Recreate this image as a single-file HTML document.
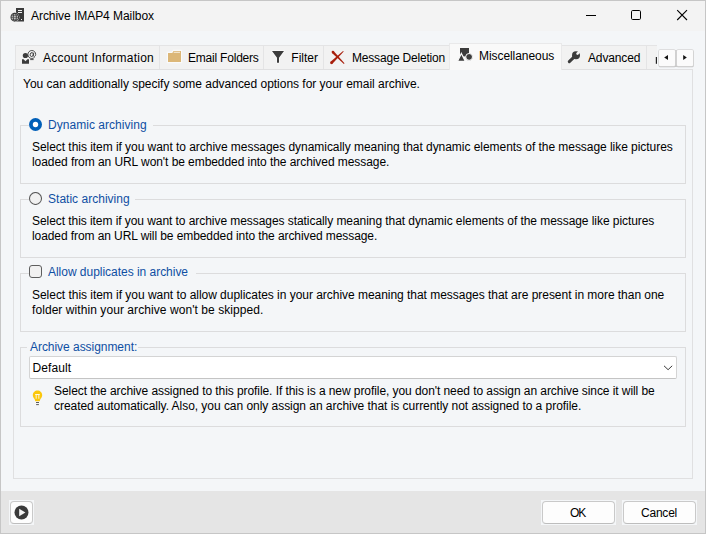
<!DOCTYPE html>
<html>
<head>
<meta charset="utf-8">
<title>Archive IMAP4 Mailbox</title>
<style>
html,body{margin:0;padding:0;}
body{width:706px;height:534px;overflow:hidden;background:#f3f3f3;font-family:"Liberation Sans",sans-serif;font-size:12px;color:#000;position:relative;}
.abs{position:absolute;}
.t{position:absolute;z-index:5;white-space:nowrap;line-height:15px;height:15px;}
#win{position:absolute;left:0;top:0;width:704px;height:532px;border:1px solid #c6c6c6;}
#titlebar{position:absolute;left:1px;top:1px;width:704px;height:30px;background:#f3f3f3;}
#content{position:absolute;left:1px;top:31px;width:704px;height:460px;background:#f4f6f8;}
#fade{position:absolute;left:1px;top:28px;width:704px;height:8px;background:linear-gradient(#f3f3f3,#f4f6f8);}
#footer{position:absolute;left:1px;top:491px;width:704px;height:42px;background:#e5e5e5;}
.tab{position:absolute;top:45px;height:24px;background:#f2f2f2;border:1px solid #e4e4e5;border-bottom:none;box-sizing:border-box;}
.tab.active{top:43px;height:27px;background:#f9f9f9;border-color:#e9e9ea;z-index:3;}
#pane{position:absolute;left:13px;top:69px;width:678px;height:408px;border:1px solid #e0e0e1;background:#f4f6f8;}
.gb{position:absolute;left:20px;width:664px;border:1px solid #dcdcdd;}
.cap{position:absolute;background:#f4f6f8;color:#0f4fa3;white-space:nowrap;line-height:15px;height:15px;}
.btn{position:absolute;background:#fdfdfd;border:1px solid #c9c9c9;border-bottom-color:#bdbdbd;border-radius:4px;box-sizing:border-box;text-align:center;}
.sb{position:absolute;top:50px;height:16px;width:16px;background:#fbfbfb;border-radius:1px;box-shadow:0 0 0 0.7px #d6d6d6, 0.2px 0.7px 0 0.5px #c2c2c2;}
.btnbg{position:absolute;background:#f4f6f8;}
</style>
</head>
<body>
<div id="titlebar"></div>
<div id="content"></div>
<div id="footer"></div>

<!-- title bar -->
<svg class="abs" style="left:10px;top:7px" width="17" height="16" viewBox="0 0 17 16">
  <rect x="6" y="1" width="8" height="13.5" fill="#3a3a3a"/>
  <rect x="8" y="3" width="4" height="1" fill="#f3f3f3"/>
  <rect x="8" y="5" width="4" height="1" fill="#f3f3f3"/>
  <rect x="11" y="12" width="1" height="1" fill="#f3f3f3"/>
  <circle cx="4.8" cy="10.2" r="4.6" fill="#f3f3f3"/>
  <circle cx="4.8" cy="10.2" r="3.8" fill="none" stroke="#3a3a3a" stroke-width="1.1"/>
  <ellipse cx="4.8" cy="10.2" rx="1.6" ry="3.8" fill="none" stroke="#3a3a3a" stroke-width="0.9"/>
  <path d="M1 10.2H8.6M1.6 8.2H8M1.6 12.2H8" stroke="#3a3a3a" stroke-width="0.9" fill="none"/>
</svg>
<span class="t" id="title" style="left:31px;top:9px;letter-spacing:-0.05px;">Archive IMAP4 Mailbox</span>
<svg class="abs" style="left:578px;top:8px" width="120" height="16" viewBox="0 0 120 16">
  <path d="M8 7.5H18" stroke="#000" stroke-width="1" fill="none"/>
  <rect x="53.5" y="2.5" width="9" height="9" rx="1.2" fill="none" stroke="#000" stroke-width="1"/>
  <path d="M99.2 2.2L109 12M109 2.2L99.2 12" stroke="#000" stroke-width="1.1" fill="none"/>
</svg>

<!-- tabs -->
<div class="tab" style="left:15px;width:145px;"></div>
<div class="tab" style="left:159px;width:105px;"></div>
<div class="tab" style="left:263px;width:61px;"></div>
<div class="tab" style="left:323px;width:127px;"></div>
<div class="tab" style="left:561px;width:86px;"></div>
<div class="tab" style="left:646px;width:11px;border-right:none;"></div>
<div id="pane"></div>
<div class="tab active" style="left:449px;width:113px;"></div>

<span class="t" style="left:43px;top:51px;letter-spacing:0.222px;">Account Information</span>
<span class="t" style="left:188px;top:51px;letter-spacing:-0.208px;">Email Folders</span>
<span class="t" style="left:291.3px;top:51px;">Filter</span>
<span class="t" style="left:352px;top:51px;letter-spacing:-0.187px;">Message Deletion</span>
<span class="t" style="left:479px;top:49px;letter-spacing:-0.067px;">Miscellaneous</span>
<span class="t" style="left:588px;top:51px;letter-spacing:-0.143px;">Advanced</span>

<!-- tab scroll buttons -->
<div class="abs" style="left:675px;top:50px;width:2px;height:16.5px;background:#c9c9c9;"></div>
<div class="sb" style="left:659.2px;"></div>
<div class="sb" style="left:677px;"></div>
<svg class="abs" style="left:654px;top:44px" width="44" height="28" viewBox="0 0 44 28">
  <path d="M14 10.9V16.1L10.2 13.5Z" fill="#111"/>
  <path d="M29.2 10.9V16.1L32.8 13.5Z" fill="#111"/>
  <rect x="1.8" y="13" width="1.2" height="6.8" fill="#222"/>
</svg>

<!-- tab icons -->
<svg class="abs" style="left:20px;top:48px;z-index:5" width="18" height="18" viewBox="0 0 18 18">
  <circle cx="5.4" cy="7.5" r="2.6" fill="#3c3c3c"/>
  <path d="M2 11.3H3.6L5.5 13.2L7.4 11.3H9V15.8H2Z" fill="#3c3c3c"/>
  <path d="M14.6 9.3C13.8 10.1 12.8 10.5 11.8 10.5C9.6 10.5 7.9 8.7 7.9 6.5C7.9 4.3 9.6 2.5 11.8 2.5C14 2.5 15.7 4.2 15.7 6.3C15.7 7.6 15 8.5 14.2 8.5C13.6 8.5 13.3 8 13.4 7.2L13.8 4.6" fill="none" stroke="#3c3c3c" stroke-width="0.9"/>
  <ellipse cx="11.7" cy="6.6" rx="1.5" ry="2" fill="none" stroke="#3c3c3c" stroke-width="0.9" transform="rotate(12 11.7 6.6)"/>
  <path d="M10.2 11.6H13.6" stroke="#3c3c3c" stroke-width="0.9"/>
</svg>
<svg class="abs" style="left:166px;top:49px;z-index:5" width="18" height="16" viewBox="0 0 18 16">
  <path d="M1.5 3.5H6L7.2 1.5H15.5V13.5H1.5Z" fill="none" stroke="#fafafa" stroke-width="1.4" stroke-linejoin="round"/>
  <path d="M2 4H6.3L7.5 2H15V13H2Z" fill="#dcb778"/>
  <path d="M7.7 3.3H14" stroke="#fbf6ec" stroke-width="0.9"/>
</svg>
<svg class="abs" style="left:270px;top:49px;z-index:5" width="16" height="16" viewBox="0 0 16 16">
  <path d="M2 2H14L9 8.8V13.8H7V8.8Z" fill="none" stroke="#fafafa" stroke-width="1.4" stroke-linejoin="round"/>
  <path d="M2 2H14L9 8.8V13.8H7V8.8Z" fill="#3c3c3c"/>
</svg>
<svg class="abs" style="left:329px;top:49px;z-index:5" width="18" height="17" viewBox="0 0 18 17">
  <g fill="#a81f0c">
  <path d="M2.97 4.01L4.83 2.19L15.49 14.32L14.91 14.88Z"/>
  <circle cx="3.9" cy="3.1" r="1.3"/>
  <path d="M14.71 2.62L14.09 1.98L1.53 12.79L3.47 14.81Z"/>
  <circle cx="2.5" cy="13.8" r="1.4"/>
  </g>
</svg>
<svg class="abs" style="left:456px;top:46px;z-index:5" width="18" height="17" viewBox="0 0 18 17">
  <rect x="4" y="2" width="9" height="8.4" fill="#3c3c3c"/>
  <path d="M5.4 7.4L9.4 15.4H1.4Z" fill="#3c3c3c" stroke="#f9f9f9" stroke-width="1.2"/>
  <circle cx="13.1" cy="10.9" r="3.4" fill="#3c3c3c" stroke="#f9f9f9" stroke-width="1"/>
</svg>
<svg class="abs" style="left:566px;top:48px;z-index:5" width="18" height="17" viewBox="0 0 18 17">
  <path d="M3.3 13.7L9 8.2" stroke="#3c3c3c" stroke-width="3" stroke-linecap="round" fill="none"/>
  <circle cx="10" cy="7.2" r="4" fill="#3c3c3c"/>
  <path d="M11.5 5.7L15 2.2" stroke="#f2f2f2" stroke-width="2.6" stroke-linecap="round" fill="none"/>
</svg>

<span class="t" style="left:23px;top:77px;letter-spacing:-0.021px;">You can additionally specify some advanced options for your email archive.</span>

<!-- group 1 -->
<div class="gb" style="top:125px;height:57px;"></div>
<div class="cap" style="left:28.5px;top:117px;width:124.5px;"></div>
<svg class="abs" style="left:29px;top:118px" width="13" height="13" viewBox="0 0 13 13">
  <circle cx="6.5" cy="6.5" r="6.5" fill="#005fb8"/>
  <circle cx="6.5" cy="6.5" r="2.7" fill="#fff"/>
</svg>
<span class="t" style="left:48px;top:118px;color:#0f4fa3;letter-spacing:0.038px;">Dynamic archiving</span>
<span class="t" style="left:32px;top:140px;letter-spacing:-0.047px;">Select this item if you want to archive messages dynamically meaning that dynamic elements of the message like pictures</span>
<span class="t" style="left:32px;top:155px;letter-spacing:-0.065px;">loaded from an URL won't be embedded into the archived message.</span>

<!-- group 2 -->
<div class="gb" style="top:199px;height:57px;"></div>
<div class="cap" style="left:28.5px;top:191px;width:106.5px;"></div>
<svg class="abs" style="left:29px;top:192px" width="13" height="13" viewBox="0 0 13 13">
  <circle cx="6.5" cy="6.5" r="6" fill="#f1f1f1" stroke="#5a5a5a" stroke-width="1.05"/>
</svg>
<span class="t" style="left:48px;top:192px;color:#0f4fa3;letter-spacing:0.02px;">Static archiving</span>
<span class="t" style="left:32px;top:214px;letter-spacing:-0.062px;">Select this item if you want to archive messages statically meaning that dynamic elements of the message like pictures</span>
<span class="t" style="left:32px;top:229px;letter-spacing:-0.084px;">loaded from an URL will be embedded into the archived message.</span>

<!-- group 3 -->
<div class="gb" style="top:273px;height:57px;"></div>
<div class="cap" style="left:28.5px;top:264px;width:167.5px;"></div>
<div class="abs" style="left:29px;top:265px;width:13px;height:13px;box-sizing:border-box;border:1px solid #5e5e5e;border-radius:3px;background:#f1f1f1;"></div>
<span class="t" style="left:48px;top:265px;color:#0f4fa3;letter-spacing:-0.027px;">Allow duplicates in archive</span>
<span class="t" style="left:32px;top:288px;letter-spacing:-0.034px;">Select this item if you want to allow duplicates in your archive meaning that messages that are present in more than one</span>
<span class="t" style="left:32px;top:303px;letter-spacing:0.07px;">folder within your archive won't be skipped.</span>

<!-- group 4 -->
<div class="gb" style="top:347px;height:78px;"></div>
<div class="cap" style="left:27px;top:339px;width:111px;"></div>
<span class="t" style="left:30px;top:340px;color:#0f4fa3;letter-spacing:-0.044px;">Archive assignment:</span>
<div class="abs" style="left:29px;top:356px;width:648px;height:23px;box-sizing:border-box;background:#fff;border:1px solid #d4d4d4;border-bottom-color:#c4c4c4;border-radius:2px;"></div>
<span class="t" style="left:32.5px;top:361px;letter-spacing:0.08px;">Default</span>
<svg class="abs" style="left:662px;top:363px" width="12" height="9" viewBox="0 0 12 9">
  <path d="M2 2.8L6.1 6.7L10.2 2.8" fill="none" stroke="#3a3a3a" stroke-width="1"/>
</svg>
<svg class="abs" style="left:32px;top:389px" width="12" height="18" viewBox="0 0 12 18">
  <path transform="translate(0,0.4)" d="M5.5 1.2C2.9 1.2 0.8 3.3 0.8 5.9C0.8 7.5 1.6 8.6 2.6 9.6L3.3 11.8H7.7L8.4 9.6C9.4 8.6 10.2 7.5 10.2 5.9C10.2 3.3 8.1 1.2 5.5 1.2Z" fill="#fbc70c"/>
  <path d="M3.2 5H7.8V6H7.3V9.8H6.4V6H4.6V9.8H3.7V6H3.2Z" fill="#fdf9ec"/>
  <rect x="3.4" y="12.8" width="4.2" height="1.5" fill="#fafafa"/>
  <rect x="3.4" y="14.9" width="4.2" height="1.5" fill="#fafafa"/>
  <rect x="4" y="13.1" width="3" height="0.9" fill="#4a4a4a"/>
  <rect x="4.1" y="15.2" width="2.8" height="0.9" fill="#4a4a4a"/>
</svg>
<span class="t" style="left:54px;top:384px;letter-spacing:-0.07px;">Select the archive assigned to this profile. If this is a new profile, you don't need to assign an archive since it will be</span>
<span class="t" style="left:54px;top:399px;letter-spacing:-0.04px;">created automatically. Also, you can only assign an archive that is currently not assigned to a profile.</span>

<!-- footer -->
<div class="btnbg" style="left:9px;top:500px;width:25px;height:25px;"></div>
<div class="btn" style="left:10px;top:501px;width:23px;height:23px;"></div>
<svg class="abs" style="left:13.5px;top:504.5px" width="15" height="15" viewBox="0 0 15 15">
  <circle cx="7.5" cy="7.5" r="7" fill="#3a3a3a"/>
  <path d="M5.2 3.8V11.2L11.4 7.5Z" fill="#f4f4f4"/>
</svg>
<div class="btnbg" style="left:541px;top:500px;width:75px;height:25px;"></div>
<div class="btn" style="left:542px;top:501px;width:73px;height:23px;"></div>
<span class="t" style="left:570px;top:506px;letter-spacing:-1.1px;">OK</span>
<div class="btnbg" style="left:622px;top:500px;width:75px;height:25px;"></div>
<div class="btn" style="left:623px;top:501px;width:73px;height:23px;"></div>
<span class="t" style="left:641px;top:506px;letter-spacing:-0.22px;">Cancel</span>

<div id="win"></div>
</body>
</html>
